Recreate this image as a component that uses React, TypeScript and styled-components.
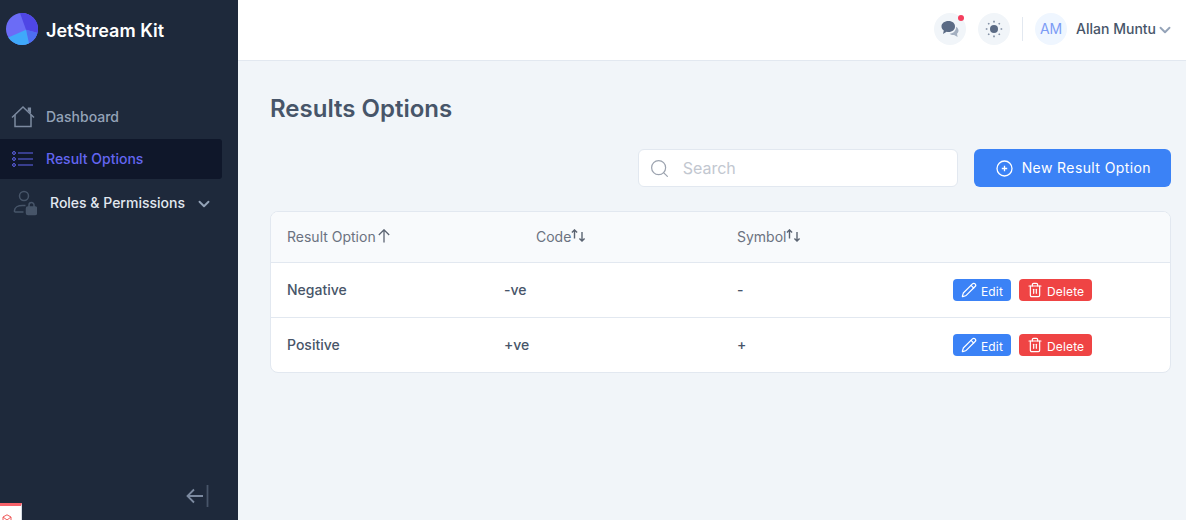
import React from "react";
import styled, { createGlobalStyle } from "styled-components";
import { ChevronDown, Pencil, Search, Trash2 } from "lucide-react";

const GlobalStyle = createGlobalStyle`
  html, body {
    margin: 0;
    padding: 0;
    height: 100%;
  }
  body {
    font-family: Inter, "Liberation Sans", sans-serif;
    background: #f1f5f9;
    overflow: hidden;
  }
`;

const rows = [
  { name: "Negative", code: "-ve", symbol: "-" },
  { name: "Positive", code: "+ve", symbol: "+" },
];

const SortIcon: React.FC = () => (
  <SortSvg width="15" height="13" viewBox="0 0 15 13" fill="none" stroke="#5b6472" strokeWidth="1.4">
    <path d="M3.500 9.500V.9M.9 3.500 3.500.9l2.600 2.600" />
    <path d="M11 3v9M8.400 9.400 11 12l2.600-2.600" />
  </SortSvg>
);

const App: React.FC = () => {
  return (
    <Page>
      <GlobalStyle />
      <Sidebar>
        <Brand>
          <svg width="32" height="32" viewBox="0 0 32 32">
            <defs>
              <clipPath id="logoClip">
                <circle cx="16" cy="16" r="16" />
              </clipPath>
            </defs>
            <g clipPath="url(#logoClip)">
              <rect width="32" height="32" fill="#6b6cf6" />
              <path d="M14 0h18v20l-12-3.300Z" fill="#4f46e5" />
              <path d="M20 16.700 32 20v15h-8Z" fill="#4d6ef0" />
              <path d="M0 25.500 20 16.700 24 35H0Z" fill="#3fa9fa" />
            </g>
          </svg>
          <BrandName>JetStream Kit</BrandName>
        </Brand>
        <Nav>
          <NavItem>
            <svg width="24" height="24" viewBox="0 0 24 24" fill="none" stroke="#7c8aa0" strokeWidth="1.500">
              <path d="M1 12.500 12 2l11 10.500" />
              <path d="M4 10v11.500h16V10" />
              <path d="M17.500 6V3.200h1.800V8" fill="#7c8aa0" />
            </svg>
            <NavLabel>Dashboard</NavLabel>
          </NavItem>
          <ActiveItem>
            <svg width="22" height="16" viewBox="0 0 22 16" fill="none" stroke="#6366f1" strokeWidth="1.200">
              <circle cx="3" cy="2" r="1.400" strokeWidth="1" />
              <circle cx="3" cy="8" r="1.400" strokeWidth="1" />
              <circle cx="3" cy="14" r="1.400" strokeWidth="1" />
              <path d="M7 2h15M7 8h15M7 14h15" />
            </svg>
            <ActiveLabel>Result Options</ActiveLabel>
          </ActiveItem>
          <GroupItem>
            <svg width="24" height="26" viewBox="0 0 24 26" fill="none" stroke="#475569" strokeWidth="1.500">
              <circle cx="11" cy="6" r="4.500" />
              <path d="M1.500 22v-1.500c0-3 3.500-5 8-5h3M1.500 22h9" />
              <rect x="13.500" y="17" width="10" height="7.500" rx="1.500" fill="#475569" />
              <path d="M16 17v-2a2.500 2.500 0 0 1 5 0v2" />
            </svg>
            <GroupLabel>Roles &amp; Permissions</GroupLabel>
            <GroupChevron size={18} color="#94a3b8" strokeWidth={2.500} />
          </GroupItem>
        </Nav>
        <Collapse>
          <svg width="24" height="24" viewBox="0 0 24 24" fill="none" stroke="#7c8aa0" strokeWidth="1.800">
            <path d="M18 12H2.500M9 5.500 2.500 12 9 18.500" />
            <path d="M22.500 1v22" stroke="#475569" />
          </svg>
        </Collapse>
      </Sidebar>
      <Main>
        <Header>
          <RoundButton>
            <svg width="18" height="18" viewBox="0 0 18 18">
              <path d="M15.200 6.800c1.400.9 2.300 2.200 2.300 3.800 0 1.300-.6 2.400-1.500 3.200l.6 3.200-3.500-2c-1.800.2-3.400-.3-4.500-1.300 3.700-.1 6.600-3 6.600-6.900Z" fill="#a3afc0" />
              <path d="M7.500 1C3.400 1 .500 3.400.500 6.500c0 1.700.9 3.100 2.300 4.100L2 14l3.600-2.200c.6.100 1.300.2 1.900.2 4.100 0 6.500-2.400 6.500-5.500S11.600 1 7.500 1Z" fill="#5b6b85" />
            </svg>
            <Dot />
          </RoundButton>
          <RoundButton>
            <svg width="18" height="18" viewBox="0 0 18 18" fill="none" stroke="#7c8aa0" strokeWidth="1.600">
              <circle cx="9" cy="9" r="4" fill="#5b6b85" stroke="none" />
              <path d="M9 .8v1.600M9 15.600v1.600M.8 9h1.600M15.600 9h1.600M3.200 3.200l1.100 1.100M13.700 13.700l1.100 1.100M3.200 14.800l1.100-1.100M13.700 4.300l1.100-1.100" />
            </svg>
          </RoundButton>
          <Divider />
          <Avatar>AM</Avatar>
          <UserName>Allan Muntu</UserName>
          <UserChevron size={18} color="#94a3b8" strokeWidth={2.500} />
        </Header>
        <Content>
          <Title>Results Options</Title>
          <Toolbar>
            <SearchBox>
              <Search size={21} color="#9ca3af" strokeWidth={1.400} />
              <SearchInput placeholder="Search" />
            </SearchBox>
            <PrimaryButton>
              <svg width="17" height="17" viewBox="0 0 17 17" fill="none" stroke="#fff" strokeWidth="1.300">
                <circle cx="8.500" cy="8.500" r="7.500" />
                <path d="M8.500 5.800v5.400M5.800 8.500h5.400" />
              </svg>
              <ButtonText>New Result Option</ButtonText>
            </PrimaryButton>
          </Toolbar>
          <Card>
            <HeadRow>
              <HeadCell>
                Result Option
                <SingleSort width="14" height="14" viewBox="0 0 14 14" fill="none" stroke="#5b6472" strokeWidth="1.300">
                  <path d="M7 13.500V1.200M1.800 6 7 .8 12.200 6" />
                </SingleSort>
              </HeadCell>
              <CodeHead>
                Code
                <SortIcon />
              </CodeHead>
              <HeadCell>
                Symbol
                <SortIcon />
              </HeadCell>
            </HeadRow>
            {rows.map((row) => (
              <BodyRow key={row.name}>
                <Cell>{row.name}</Cell>
                <Cell>{row.code}</Cell>
                <Cell>{row.symbol}</Cell>
                <Actions>
                  <EditButton>
                    <Pencil size={16} strokeWidth={1.800} />
                    <ActionText>Edit</ActionText>
                  </EditButton>
                  <DeleteButton>
                    <Trash2 size={16} strokeWidth={1.800} />
                    <ActionText>Delete</ActionText>
                  </DeleteButton>
                </Actions>
              </BodyRow>
            ))}
          </Card>
        </Content>
      </Main>
      <DevBadge>
        <svg width="10" height="10" viewBox="0 0 10 10" fill="none" stroke="#ef5a5a" strokeWidth="1">
          <path d="M5 .8 9 3v5H1V3Z" />
          <path d="M1 3l4 3 4-3" />
        </svg>
      </DevBadge>
    </Page>
  );
};

export default App;

const Page = styled.div`
  display: flex;
  width: 100%;
  height: 100vh;
  overflow: hidden;
`;

const Sidebar = styled.aside`
  position: relative;
  flex: 0 0 238px;
  background: #1e293b;
`;

const Brand = styled.div`
  display: flex;
  align-items: center;
  gap: 8px;
  height: 60px;
  padding: 0 0 2px 6px;
  box-sizing: border-box;
`;

const BrandName = styled.span`
  margin-top: 2px;
  font-size: 18px;
  font-weight: 600;
  color: #fff;
`;

const Nav = styled.nav`
  display: flex;
  flex-direction: column;
  width: 222px;
  margin-top: 37px;
`;

const NavItem = styled.div`
  display: flex;
  align-items: center;
  gap: 11px;
  height: 40px;
  padding-left: 11px;
`;

const NavLabel = styled.span`
  padding-bottom: 2px;
  font-size: 14px;
  font-weight: 500;
  color: #94a3b8;
`;

const ActiveItem = styled.div`
  display: flex;
  align-items: center;
  gap: 13px;
  height: 40px;
  margin-top: 2px;
  padding-left: 11px;
  background: #0f172a;
  border-radius: 0 3px 3px 0;
`;

const ActiveLabel = styled.span`
  padding-bottom: 2px;
  font-size: 14px;
  font-weight: 500;
  color: #6366f1;
`;

const GroupItem = styled.div`
  display: flex;
  align-items: center;
  height: 48px;
  padding: 0 9px 0 13px;
`;

const GroupLabel = styled.span`
  flex: 1;
  margin-left: 13px;
  padding-bottom: 2px;
  font-size: 14px;
  font-weight: 500;
  color: #e2e8f0;
`;

const GroupChevron = styled(ChevronDown)`
  margin-top: 2px;
`;

const Collapse = styled.div`
  position: absolute;
  right: 29px;
  bottom: 12px;
  display: flex;
`;

const Main = styled.div`
  flex: 1;
  min-width: 0;
  display: flex;
  flex-direction: column;
`;

const Header = styled.header`
  display: flex;
  align-items: center;
  justify-content: flex-end;
  height: 61px;
  box-sizing: border-box;
  padding: 0 12px 3px 0;
  background: #fff;
  border-bottom: 1px solid #e2e8f0;
`;

const RoundButton = styled.div`
  position: relative;
  display: flex;
  align-items: center;
  justify-content: center;
  width: 32px;
  height: 32px;
  margin-right: 12px;
  border-radius: 50%;
  background: #f1f5f9;
`;

const Dot = styled.span`
  position: absolute;
  top: 2px;
  right: 2px;
  width: 6px;
  height: 6px;
  border-radius: 50%;
  background: #f43f5e;
`;

const Divider = styled.span`
  width: 1px;
  height: 24px;
  margin: 0 12px 0 0;
  background: #e2e8f0;
`;

const Avatar = styled.div`
  display: flex;
  align-items: center;
  justify-content: center;
  width: 32px;
  height: 32px;
  border-radius: 50%;
  background: #eff6ff;
  color: #7c9cf5;
  font-size: 14px;
`;

const UserName = styled.span`
  margin-left: 9px;
  font-size: 14px;
  font-weight: 500;
  color: #475569;
`;

const UserChevron = styled(ChevronDown)`
  margin-top: 3px;
`;

const Content = styled.main`
  flex: 1;
  padding: 32px 15px 0 32px;
`;

const Title = styled.h1`
  margin: 0;
  font-size: 24px;
  line-height: 32px;
  font-weight: 600;
  color: #475569;
`;

const Toolbar = styled.div`
  display: flex;
  justify-content: flex-end;
  gap: 16px;
  margin-top: 24px;
`;

const SearchBox = styled.label`
  display: flex;
  align-items: center;
  gap: 13px;
  width: 320px;
  height: 38px;
  box-sizing: border-box;
  padding: 0 10px;
  background: #fff;
  border: 1px solid #e2e8f0;
  border-radius: 6px;
`;

const SearchInput = styled.input`
  flex: 1;
  min-width: 0;
  border: none;
  outline: none;
  padding: 0;
  background: none;
  font: 400 16px Inter, "Liberation Sans", sans-serif;
  color: #475569;

  &::placeholder {
    color: #c2c7d0;
    opacity: 1;
  }
`;

const PrimaryButton = styled.button`
  display: flex;
  align-items: center;
  gap: 9px;
  height: 38px;
  padding: 0 20px 0 22px;
  border: none;
  border-radius: 6px;
  background: #3b82f6;
  color: #fff;
  font: 400 14px Inter, "Liberation Sans", sans-serif;
  letter-spacing: 0.4px;
`;

const ButtonText = styled.span`
  padding-bottom: 2px;
`;

const Card = styled.section`
  margin-top: 24px;
  background: #fff;
  border: 1px solid #e2e8f0;
  border-radius: 8px;
  overflow: hidden;
`;

const HeadRow = styled.div`
  display: grid;
  grid-template-columns: 217px 233px 216px 1fr;
  align-items: center;
  height: 51px;
  box-sizing: border-box;
  padding-left: 16px;
  background: #f8fafc;
  border-bottom: 1px solid #e2e8f0;
`;

const HeadCell = styled.div`
  display: flex;
  align-items: flex-start;
  font-size: 14px;
  line-height: 20px;
  color: #6b7280;
`;

const CodeHead = styled(HeadCell)`
  padding-left: 32px;
`;

const SortSvg = styled.svg`
  margin-top: 2px;
`;

const SingleSort = styled(SortSvg)`
  margin-left: 1px;
`;

const BodyRow = styled.div`
  display: grid;
  grid-template-columns: 217px 233px 216px 1fr;
  align-items: center;
  height: 54px;
  box-sizing: border-box;
  padding-left: 16px;

  & + & {
    height: 55px;
    border-top: 1px solid #e2e8f0;
  }
`;

const Cell = styled.div`
  padding-bottom: 2px;
  font-size: 14px;
  font-weight: 500;
  color: #475569;
`;

const Actions = styled.div`
  display: flex;
  gap: 8px;
`;

const EditButton = styled.button`
  display: flex;
  align-items: center;
  gap: 4px;
  height: 22px;
  padding: 0 8px;
  border: none;
  border-radius: 4px;
  background: #3b82f6;
  color: #fff;
  font: 400 12px Inter, "Liberation Sans", sans-serif;
  letter-spacing: 0.15px;
`;

const DeleteButton = styled(EditButton)`
  background: #ef4444;
`;

const ActionText = styled.span`
  padding-top: 2px;
`;

const DevBadge = styled.div`
  position: fixed;
  left: 0;
  bottom: 0;
  display: flex;
  width: 22px;
  height: 17px;
  padding: 8px 0 0 2px;
  box-sizing: border-box;
  background: #fff;
  border-top: 3px solid #f8626a;
  border-right: 1px solid #d6dbe3;
`;
